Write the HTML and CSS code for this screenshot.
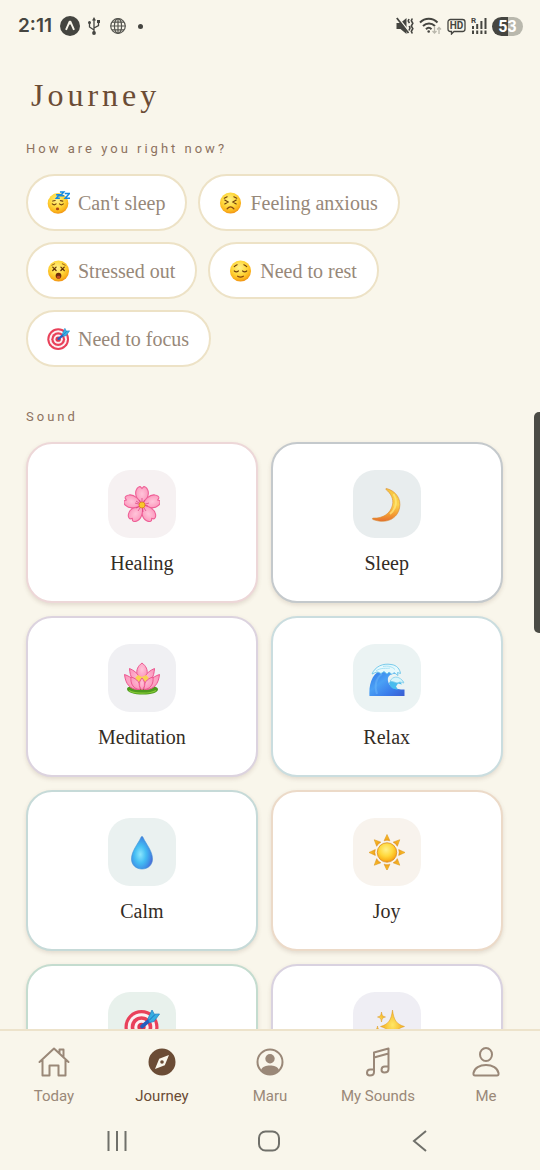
FILE: index.html
```
<!doctype html>
<html lang="en">
<head>
<meta charset="utf-8">
<meta name="viewport" content="width=device-width, initial-scale=1">
<title>Journey</title>
<link rel="stylesheet" href="styles.css">
</head>
<body>

<!-- shared gradients and symbols -->
<svg class="defs" aria-hidden="true">
	<defs>
		<radialGradient id="face" cx="45%" cy="35%" r="68%">
			<stop offset="0" stop-color="#fff18a"/>
			<stop offset=".5" stop-color="#ffd83c"/>
			<stop offset=".8" stop-color="#fbb41c"/>
			<stop offset="1" stop-color="#ee8a12"/>
		</radialGradient>
		<linearGradient id="moon" x1="0" y1="0" x2="0" y2="1">
			<stop offset="0" stop-color="#f7c33e"/>
			<stop offset=".5" stop-color="#fbd24c"/>
			<stop offset=".8" stop-color="#f39a32"/>
			<stop offset="1" stop-color="#e5702f"/>
		</linearGradient>
		<radialGradient id="petal" cx="50%" cy="40%" r="60%">
			<stop offset="0" stop-color="#ffc4d9"/>
			<stop offset="1" stop-color="#fb92b9"/>
		</radialGradient>
		<linearGradient id="wave" x1="0" y1="0" x2="1" y2="1">
			<stop offset="0" stop-color="#2f74e6"/>
			<stop offset=".4" stop-color="#4aa0f5"/>
			<stop offset=".7" stop-color="#3a7deb"/>
			<stop offset="1" stop-color="#3a5bd0"/>
		</linearGradient>
		<radialGradient id="drop" cx="42%" cy="55%" r="60%">
			<stop offset="0" stop-color="#8be6fd"/>
			<stop offset=".45" stop-color="#44bdf3"/>
			<stop offset=".8" stop-color="#3f8fe6"/>
			<stop offset="1" stop-color="#5561d2"/>
		</radialGradient>
		<linearGradient id="ray" x1="0" y1="0" x2="0" y2="1">
			<stop offset="0" stop-color="#fdc926"/>
			<stop offset="1" stop-color="#ee9d1b"/>
		</linearGradient>
		<radialGradient id="star" cx="50%" cy="45%" r="50%">
			<stop offset="0" stop-color="#ffe766"/>
			<stop offset="1" stop-color="#f3ac1c"/>
		</radialGradient>
		<symbol id="target" viewBox="0 0 36 36">
			<circle cx="17.500" cy="19" r="17" fill="#e9415a"/>
			<circle cx="17.500" cy="19" r="13.800" fill="#fbf1f3"/>
			<circle cx="17.500" cy="19" r="10.800" fill="#e9415a"/>
			<circle cx="17.500" cy="19" r="7.200" fill="#fbf1f3"/>
			<circle cx="17.500" cy="19" r="4.200" fill="#df3650"/>
			<path d="m18 18.500 9-7.500" stroke="#245fc0" stroke-width="3.600" stroke-linecap="round"/>
			<path d="m24 10.500 4-8.500 2.300 4.200 5.200-.2-5.500 7.500-4.500 1z" fill="#37aee0" stroke="#2584c8" stroke-width=".8"/>
			<path d="m25 12.500 6-6" stroke="#1f6fc0" stroke-width="1"/>
		</symbol>
	</defs>
</svg>

<div class="status">
	<div class="status-side">
		<span class="clock">2:11</span>
		<svg width="20" height="20" viewBox="0 0 20 20"><circle cx="10" cy="10" r="10" fill="#454540"/><path d="m6 13.800 3.500-8h1l3.500 8M9.200 7.500h1.600" fill="none" stroke="#f9f6eb" stroke-width="1.900" stroke-linejoin="round"/></svg>
		<svg class="usb" width="12" height="18" viewBox="0 0 12 18" fill="none" stroke="#454540" stroke-width="1.300"><path d="M6 16V2M6 13 1.500 10V6M6 11l4.500-2.500V5"/><g fill="#454540" stroke="none"><path d="m6 0 2 3.500H4z"/><circle cx="6" cy="16" r="1.900"/><circle cx="1.500" cy="5.500" r="1.500"/><path d="M9 3h3v3H9z"/></g></svg>
		<svg width="16" height="16" viewBox="0 0 16 16" fill="none" stroke="#55554f" stroke-width="1.200"><circle cx="8" cy="8" r="7.300"/><ellipse cx="8" cy="8" rx="3.600" ry="7.300"/><path d="M8 .7v14.600M.7 8h14.600M2 4.200h12M2 11.800h12"/></svg>
		<i class="dot"></i>
	</div>
	<div class="status-side right">
		<svg width="18" height="18" viewBox="0 0 18 18"><path d="M.5 6h4L10.500 1v16l-6-5h-4z" fill="#454540"/><path d="m2 .5 11 14" stroke="#f9f6eb" stroke-width="1.500"/><path d="m.8 1 11.700 15" stroke="#454540" stroke-width="1.800"/><path d="m13 2-.8 2 1.200 2.200M13.200 9l.8 2-1 2.500M16.300 1.500l-1 2.200 1.500 2.600-1.500 2.700 1.500 2.700-1.500 2.600 1 2.200" fill="none" stroke="#454540" stroke-width="1.600"/></svg>
		<svg width="23" height="18" viewBox="0 0 23 18" fill="none" stroke="#454540" stroke-width="2"><path d="M1 5.500C6 .5 13.500.5 18.500 5.500M4 9c3.500-3.500 8.500-3.500 12 0M7 12.200c1.800-1.800 3.800-1.800 5.500 0"/><circle cx="9.700" cy="14.500" r="1.300" fill="#454540" stroke="none"/><path d="M15.500 9.500V16m-2-2 2 2 2-2M20 17v-6.500m-2 2 2-2 2 2" stroke="#b9b7ac" stroke-width="1.300"/></svg>
		<svg width="19" height="17" viewBox="0 0 19 17"><path d="M3.500 1.500h12a2.500 2.500 0 0 1 2.500 2.500v7a2.500 2.500 0 0 1-2.500 2.500H7L4.500 16v-2.500h-1A2.500 2.500 0 0 1 1 11V4a2.500 2.500 0 0 1 2.500-2.500z" fill="none" stroke="#454540" stroke-width="1.300"/><text x="9.500" y="11.300" text-anchor="middle" class="hd">HD</text></svg>
		<svg width="16" height="18" viewBox="0 0 16 18"><text x="0" y="6" class="roam">R</text><path d="M2 9v3M6.200 7v5M10.400 4v8M14.500 1v11M2 13.500V17M6.200 13.500V17M10.400 13.500V17M14.500 13.500V17" stroke="#454540" stroke-width="2"/></svg>
		<span class="battery">53</span>
	</div>
</div>

<main class="content">
	<h1>Journey</h1>

	<h2>How are you right now?</h2>
	<div class="moods">
		<button class="mood">
			<svg viewBox="0 0 24 24"><circle cx="11.500" cy="13" r="10.800" fill="url(#face)"/><path d="M5.500 13.500q2 1.800 4 0M13 13.500q2 1.800 4 0M6 10.500l2.500-.6M14 10l2.500.5" fill="none" stroke="#70410e" stroke-width="1.200" stroke-linecap="round"/><ellipse cx="11" cy="18.700" rx="1.700" ry="1.500" fill="#b04716"/><path d="M9.500 4h3.300l-3 3.500h3.600M13.500 1h4l-3.500 4h4M18.500 2.500h5l-4.500 5h5" fill="none" stroke="#1689e0" stroke-width="1.600"/></svg>
			Can't sleep
		</button>
		<button class="mood">
			<svg viewBox="0 0 24 24"><circle cx="12" cy="12.500" r="11" fill="url(#face)"/><path d="m6 9.500 3.500 2-3.500 2M18 9.500l-3.500 2 3.500 2M5.500 7.500 8.500 6M18.500 7.500l-3-1.500" fill="none" stroke="#70410e" stroke-width="1.200" stroke-linecap="round"/><path d="M8.500 18.500q3.500-3.800 7 0" fill="none" stroke="#8b4a10" stroke-width="1.300" stroke-linecap="round"/></svg>
			Feeling anxious
		</button>
		<button class="mood">
			<svg viewBox="0 0 24 24"><circle cx="12" cy="12.500" r="11" fill="url(#face)"/><path d="m6 8.500 3.500 3.500m0-3.500L6 12M14.500 8.500 18 12m0-3.500L14.500 12" stroke="#633208" stroke-width="1.300" stroke-linecap="round"/><path d="m5 6.500 3-1.500M19 6.500 16 5" stroke="#9c6417" stroke-linecap="round"/><ellipse cx="12" cy="17.500" rx="3" ry="3.200" fill="#6e2b0b"/><ellipse cx="12" cy="19" rx="2" ry="1.500" fill="#c14b21"/></svg>
			Stressed out
		</button>
		<button class="mood">
			<svg viewBox="0 0 24 24"><circle cx="12" cy="12.500" r="11" fill="url(#face)"/><path d="M5.500 12.500q2.200 1.800 4.300 0M14.200 12.500q2.200 1.800 4.300 0M5.500 8q1.500-1.500 3-2M18.500 8q-1.500-1.500-3-2" fill="none" stroke="#70410e" stroke-width="1.200" stroke-linecap="round"/><path d="M9 18q3 1.600 6 0" fill="none" stroke="#8b4a10" stroke-width="1.300" stroke-linecap="round"/></svg>
			Need to rest
		</button>
		<button class="mood">
			<svg><use href="#target"/></svg>
			Need to focus
		</button>
	</div>

	<h2 class="sound-title">Sound</h2>
	<div class="sounds">
		<button class="card healing">
			<span class="tile"><svg viewBox="0 0 36 36">
				<g fill="url(#petal)" stroke="#ee5f96" stroke-width="1.100">
					<path id="sakura" d="M18 19C13.500 15.500 10 8 12.500 3.500 13.500 1.300 15.500.3 16.500.8L18 2.500 19.500.8C20.500.3 22.500 1.300 23.500 3.500 26 8 22.500 15.500 18 19z"/>
					<use href="#sakura" transform="rotate(72 18 19)"/>
					<use href="#sakura" transform="rotate(144 18 19)"/>
					<use href="#sakura" transform="rotate(216 18 19)"/>
					<use href="#sakura" transform="rotate(288 18 19)"/>
				</g>
				<path d="M18 19V12m0 7-3-5m3 5 3-5m-3 5 7-2m-7 2 6 1m-6-1 4 6m-4-6 1 7m-1-7-4 6m4-6-6 3m6-3-7-2m7 2-6-4" stroke="#d83d7b" stroke-width=".7"/>
				<circle cx="18" cy="19" r="3" fill="#f9c82b" stroke="#d78619" stroke-width=".8"/>
			</svg></span>
			Healing
		</button>
		<button class="card sleep">
			<span class="tile"><svg viewBox="0 0 36 36"><path d="M17.500 2.500C27 5 32.500 13 30.500 22 28.500 32.500 17.500 38.500 4 33.500c-.8-.4-.8-1.400.2-1.400C14 32.500 21.500 27.500 23.500 19 24.800 13 22 7.500 17 3.500c-.5-.5-.2-1.100.5-1z" fill="url(#moon)" stroke="#d98a2f" stroke-width=".6"/><path d="M24.500 8c4.500 7 2.500 15-3.500 20" fill="none" stroke="#ffea80" stroke-width="1.800" opacity=".7"/></svg></span>
			Sleep
		</button>
		<button class="card meditation">
			<span class="tile"><svg viewBox="0 0 36 36">
				<path d="M3 29c0-3 6-3 15-3s16 0 16 3.500c0 3-7 5-15 5C10 34.500 3 32.500 3 29z" fill="#4d9a1d"/>
				<path d="M5 30.500c4 3 20 4 27 0" fill="none" stroke="#85c936" stroke-width="1.200"/>
				<g fill="url(#petal)" stroke="#ec5790" stroke-width="1">
					<path d="M18 3c-4 3-6 6.500-5 12.500L18 19l5-3.500C24 9.500 22 6 18 3z"/>
					<path d="M5.500 8.500C6 17 9 23 17 27c1-8-3-15-11.500-18.500zM30.500 8.500C30 17 27 23 19 27c-1-8 3-15 11.500-18.500z"/>
					<path d="M.5 14.500C1.500 24 6 29.500 14 29.500 13 22 8 17 .5 14.500zM35.500 14.500C34.500 24 30 29.500 22 29.500c1-7.500 6-12.500 13.500-15z"/>
				</g>
				<path d="m11 18 3-3 4 2 4-2 3 3-3 4h-8z" fill="#f7d253"/>
				<g fill="url(#petal)" stroke="#ec5790" stroke-width="1">
					<path d="M7 17c-1 7 3 12.500 9 12.500 1-6-3-11-9-12.500zM29 17c1 7-3 12.500-9 12.500-1-6 3-11 9-12.500z"/>
					<path d="M18 18c-3.500 4-4 8 0 12 4-4 3.500-8 0-12z"/>
				</g>
			</svg></span>
			Meditation
		</button>
		<button class="card relax">
			<span class="tile"><svg viewBox="0 0 36 36">
				<path d="M.5 36.500C-.5 23 4 11 15 10c5 0 10 2 13 4-6-1.500-10 2-9 7 1 6 7 8.500 16.500 8.500v7z" fill="url(#wave)"/>
				<path d="M8 34C5 26 7 18 13 14" fill="none" stroke="#6cb8fa" stroke-width="2" opacity=".5"/>
				<path d="M3 14C6 6.500 14 3 22 4.500c6 .5 9 5 9.500 9l-3-1 .5 3-4-3-2 2-3-2.500-2 2-3-2.500-3 2-3-1.500c-3 0-5 2-6 2z" fill="#e6f9fd" stroke="#6cc5e9" stroke-width=".9"/>
				<path d="M7 11c5-4 11-2 14-3M14 6.500c5-1 9 0 12 3" fill="none" stroke="#96daf1" stroke-width=".8"/>
				<path d="M20 23c2-4 7-6 11-4l4 3-4-.5 2 3-4-1-2 3 2 3c-5 0-8-2-9-6.500z" fill="#48bcee"/>
				<path d="M21 21c3-5 8-5 12-1l2 3-4-1-3 1-3-1z" fill="#d5f5fc" stroke="#75c9e9" stroke-width=".7"/>
			</svg></span>
			Relax
		</button>
		<button class="card calm">
			<span class="tile"><svg viewBox="0 0 36 36"><path d="M18 2.500c.6 0 .9.500 1.200 1.200C22 10 28.500 17 28.500 25c0 6-4.500 10-10.500 10S7.500 31 7.500 25C7.500 17 14 10 16.800 3.700 17.100 3 17.400 2.500 18 2.500z" fill="url(#drop)" stroke="#3a94d5" stroke-width=".6"/></svg></span>
			Calm
		</button>
		<button class="card joy">
			<span class="tile"><svg viewBox="0 0 36 37">
				<g fill="url(#ray)" stroke="#dc9620" stroke-width=".6" stroke-linejoin="round">
					<path id="sunray" d="M18 .5 21 7q-3-1.200-6 0z"/>
					<use href="#sunray" transform="rotate(45 18 19)"/>
					<use href="#sunray" transform="rotate(90 18 19)"/>
					<use href="#sunray" transform="rotate(135 18 19)"/>
					<use href="#sunray" transform="rotate(180 18 19)"/>
					<use href="#sunray" transform="rotate(225 18 19)"/>
					<use href="#sunray" transform="rotate(270 18 19)"/>
					<use href="#sunray" transform="rotate(315 18 19)"/>
				</g>
				<circle cx="18" cy="19" r="10" fill="url(#face)" stroke="#d98b1d" stroke-width=".8"/>
			</svg></span>
			Joy
		</button>
		<button class="card focus" aria-labelledby="">
			<span class="tile"><svg><use href="#target"/></svg></span>
		</button>
		<button class="card sparkle">
			<span class="tile"><svg viewBox="0 0 36 36"><g fill="url(#star)" stroke="#dc9822" stroke-width=".5"><path d="M23.500 2C25 12 27 16 35.500 18.500 27 21 25 25 23.500 35 22 25 20 21 11.500 18.500 20 16 22 12 23.500 2z"/><path d="M12.500 4c.5 3.500 1.300 4.500 4 5-2.700.5-3.500 1.500-4 5-.5-3.500-1.300-4.500-4-5 2.700-.5 3.500-1.500 4-5zM8.500 18c.3 3 1.300 4 3.500 4.500-2.200.5-3.200 1.500-3.500 4.500-.3-3-1.300-4-3.500-4.500C7.200 22 8.200 21 8.500 18z"/></g></svg></span>
		</button>
	</div>
</main>

<nav class="tabs">
	<a href="#">
		<svg viewBox="0 0 32 32"><path d="M1.500 16 16 2.500 30.500 16M4.500 14v15.500h7V19.500h9v10h7V14M21.500 7V3.500h4V11"/></svg>
		Today
	</a>
	<a href="#" class="active">
		<svg viewBox="0 0 32 32"><path class="solid" fill-rule="evenodd" d="M16 2.500a13.500 13.500 0 1 0 0 27 13.500 13.500 0 0 0 0-27zM23 9l-4.200 10.200L9 23l4.200-10.200z"/><circle class="solid" cx="16" cy="16" r="1.800"/></svg>
		Journey
	</a>
	<a href="#">
		<svg viewBox="0 0 32 32"><circle cx="16" cy="16" r="12.500"/><circle class="solid" cx="16" cy="12.800" r="4.700"/><path class="solid" d="M7 24c1.500-3.500 5-4.500 9-4.500s7.500 1 9 4.500c-4 6.500-14 6.500-18 0z"/></svg>
		Maru
	</a>
	<a href="#">
		<svg viewBox="0 0 32 32"><path d="M12 26V6.500L26.500 2.500v20M12 11.500l14.500-4M12 23.500H8.500a3.400 3.400 0 0 0-3.500 3.200c0 2 1.200 2.800 2.800 2.800 2.500 0 4.200-1.500 4.200-3.500zM26.500 20.500H23a3.400 3.400 0 0 0-3.500 3.200c0 2 1.200 2.800 2.800 2.800 2.500 0 4.200-1.500 4.200-3.500z"/></svg>
		My Sounds
	</a>
	<a href="#">
		<svg viewBox="0 0 32 32"><ellipse cx="16" cy="8.500" rx="6" ry="6.500"/><path d="M16 19c-6.500 0-11.500 3.200-12.500 8-.3 1.700.3 2.500 1.600 2.500h21.800c1.300 0 1.900-.8 1.600-2.500-1-4.800-6-8-12.500-8z"/></svg>
		Me
	</a>
</nav>

<div class="system">
	<button><svg viewBox="0 0 24 24"><path d="M3.500 2v20M12 2v20M20.500 2v20"/></svg></button>
	<button><svg viewBox="0 0 24 24"><rect x="2" y="2.500" width="20" height="19" rx="6.500"/></svg></button>
	<button><svg viewBox="0 0 24 24"><path d="M18 2 6 12l12 10"/></svg></button>
</div>

<div class="edge"></div>

</body>
</html>
```

FILE: styles.css
```
*{margin: 0;padding: 0;box-sizing: border-box;}
body{display: flex;flex-direction: column;height: 100vh;overflow: hidden;position: relative;
	background: #f9f6eb;font-family: Roboto, sans-serif;color: #6b4c35;}
button{background: none;border: none;font: inherit;color: inherit;cursor: pointer;}
svg{display: block;flex: none;}
.defs{position: absolute;width: 0;height: 0;}

/* status bar */
.status{display: flex;justify-content: space-between;align-items: center;flex: none;
	height: 52px;padding: 0 17px 0 18px;}
.status-side{display: flex;align-items: center;gap: 8px;}
.right{gap: 5px;}
.clock{font: 600 19px/24px Inter, sans-serif;color: #454540;}
.usb{margin-right: 2px;}
.dot{width: 5px;height: 5px;margin-left: 4px;border-radius: 50%;background: #454540;}
.hd{font: 700 10px Roboto, sans-serif;fill: #454540;}
.roam{font: 700 8px Roboto, sans-serif;fill: #454540;}
.battery{width: 31px;border-radius: 10px;font: 700 16px/19px Roboto, sans-serif;text-align: center;
	color: #fff;background: linear-gradient(90deg, #454540 52%, #b9b8ad 52%);}

/* content */
.content{flex: 1;min-height: 0;overflow: hidden;padding: 23px 26px 0;}
h1{padding-left: 5px;font: 400 32px/40px "Liberation Serif", serif;letter-spacing: 4px;color: #6b4c35;}
h2{margin: 24px 0 15px;font-weight: 400;font-size: 13px;line-height: 20px;letter-spacing: 3px;color: #8d725f;}
.sound-title{margin-top: 40px;}

.moods{display: flex;flex-wrap: wrap;gap: 11px;}
.mood{display: flex;align-items: center;gap: 8px;height: 57px;padding: 0 20px 0 19px;
	border: 2px solid #ede2c6;border-radius: 29px;background: #fff;
	font: 20px/24px "Liberation Serif", serif;color: #978879;}
.mood svg{width: 23px;height: 23px;}

.sounds{display: grid;grid-template-columns: repeat(2, 47.5%);gap: 13px;}
.card{display: flex;flex-direction: column;align-items: center;gap: 13px;min-height: 161px;padding: 26px 0;
	border: 2px solid;border-radius: 26px;background: #fff;box-shadow: 0 2px 4px rgba(107,76,53,.16);
	font: 20px/24px "Liberation Serif", serif;color: #332c25;}
.tile{display: flex;align-items: center;justify-content: center;width: 68px;height: 68px;border-radius: 22px;}
.tile svg{width: 36px;height: 36px;}

.healing{border-color: #edd7d8;}
.healing .tile{background: #f6f1f2;}
.sleep{border-color: #c4c9cc;}
.sleep .tile{background: #e8edee;}
.meditation{border-color: #dcd3df;}
.meditation .tile{background: #f0f0f3;}
.relax{border-color: #cadddf;}
.relax .tile{background: #ebf3f3;}
.calm{border-color: #c6dad8;}
.calm .tile{background: #eaf1f0;}
.joy{border-color: #ecdac8;}
.joy .tile{background: #f8f3ed;}
.focus{border-color: #c4dccf;}
.focus .tile{background: #e8f1ec;}
.sparkle{border-color: #d9d2e0;}
.sparkle .tile{background: #efeef4;}

/* bottom tabs */
.tabs{display: flex;flex: none;padding: 15px 0 0;border-top: 2px solid #ede3cb;}
.tabs a{display: flex;flex: 1;flex-direction: column;align-items: center;gap: 8px;
	font-size: 15px;line-height: 20px;text-decoration: none;color: #9a8878;}
.tabs .active{color: #6b4c35;}
.tabs svg{width: 32px;height: 32px;fill: none;stroke: currentColor;stroke-width: 2;
	stroke-linejoin: round;stroke-linecap: round;}
.tabs .solid{fill: currentColor;stroke: none;}

/* android navigation */
.system{display: flex;flex: none;justify-content: space-between;align-items: center;height: 64px;padding: 5px 108px 0 105px;}
.system svg{width: 24px;height: 24px;fill: none;stroke: #70706a;stroke-width: 2;}

/* edge panel handle */
.edge{position: absolute;top: 412px;right: 0;width: 6px;height: 221px;border-radius: 5px 0 0 5px;background: #4b4b45;}
```
